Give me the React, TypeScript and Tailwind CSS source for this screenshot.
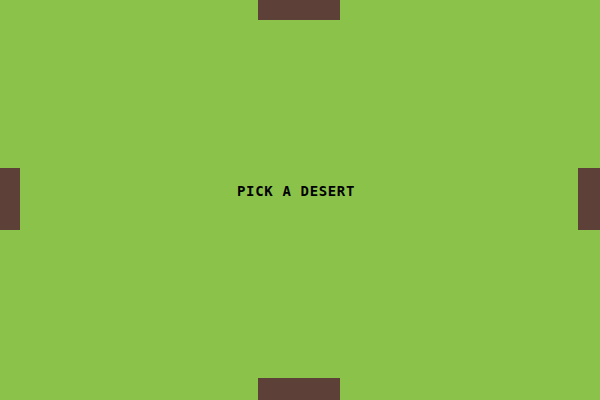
export default function App() {
  return (
    <div className="w-[600px] h-[400px] bg-[#8bc34a] flex flex-col overflow-hidden">
      <div className="h-[20px] w-[82px] ml-[258px] bg-[#5d4037]" />
      <div className="flex-1 flex items-start pt-[148px]">
        <div className="w-[20px] h-[62px] bg-[#5d4037]" />
        <div className="flex-1 pl-[217px] pt-[16px]">
          <p className="font-['DejaVu_Sans_Mono',monospace] font-bold text-[14px] leading-[14px] tracking-[0.65px] text-black whitespace-nowrap">
            PICK A DESERT
          </p>
        </div>
        <div className="w-[22px] h-[62px] bg-[#5d4037]" />
      </div>
      <div className="h-[22px] w-[82px] ml-[258px] bg-[#5d4037]" />
    </div>
  );
}
